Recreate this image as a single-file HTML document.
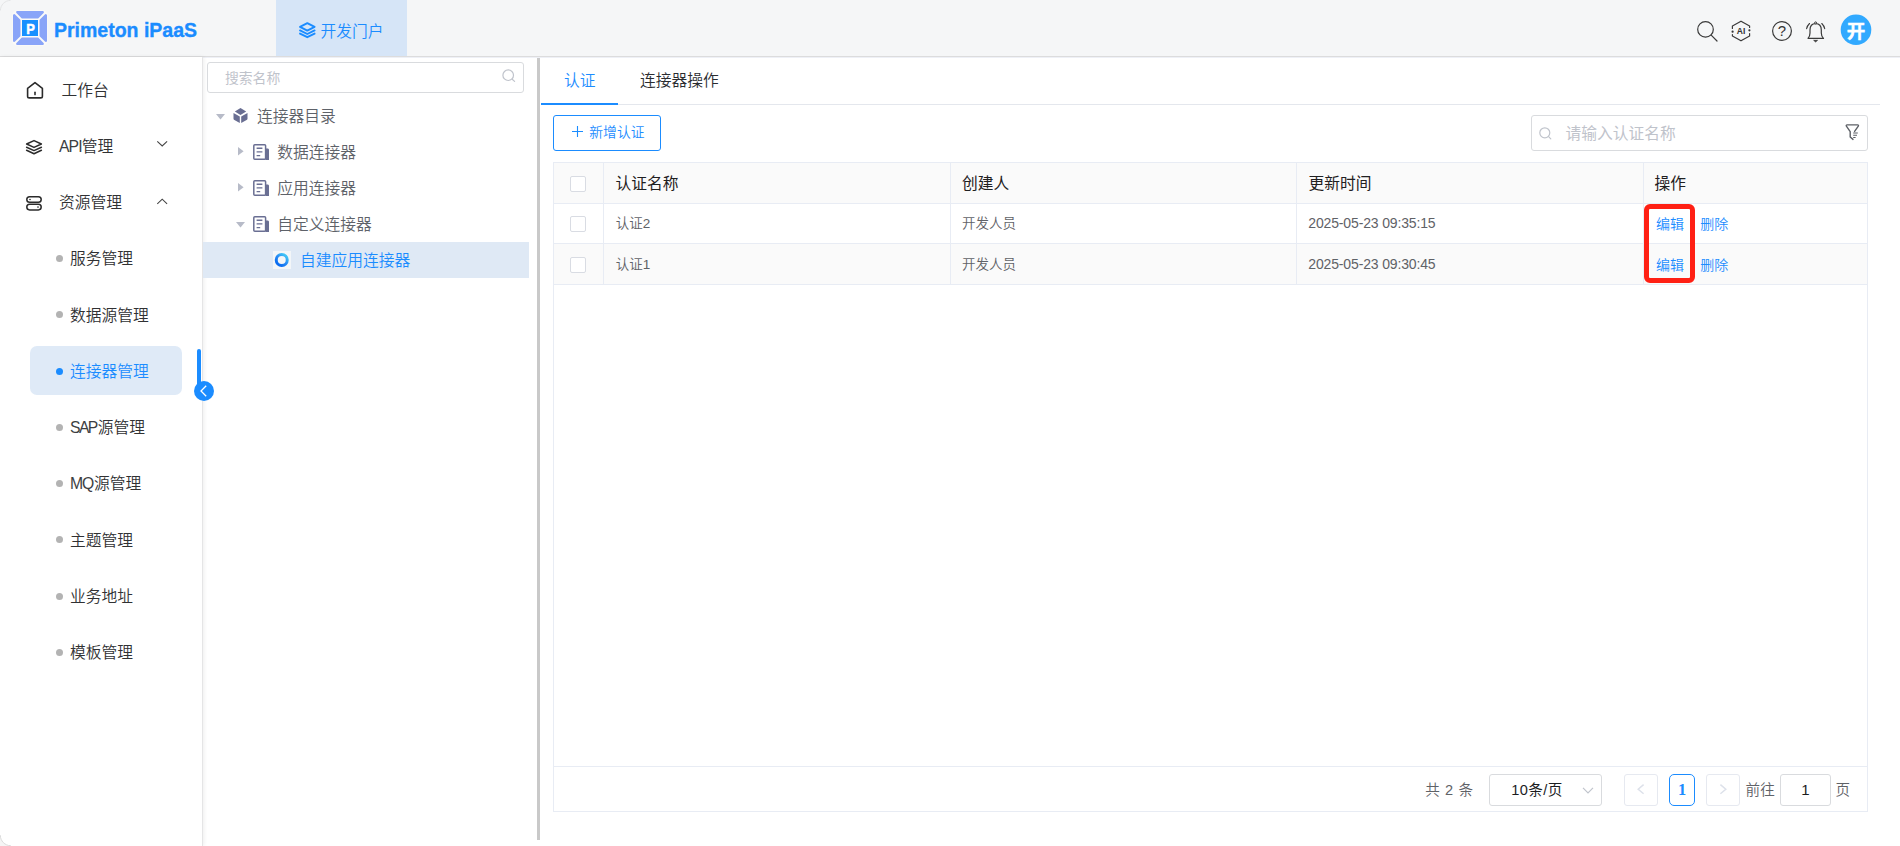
<!DOCTYPE html>
<html lang="zh-CN">
<head>
<meta charset="utf-8">
<title>Primeton iPaaS</title>
<style>
*{box-sizing:border-box;margin:0;padding:0}
html,body{width:1900px;height:846px;overflow:hidden;background:#fff}
body{font-family:"Liberation Sans","Noto Sans CJK SC",sans-serif;color:#303133;font-size:15.75px;position:relative;font-weight:350}
.t{position:absolute;white-space:nowrap;height:20px;line-height:20px}
svg{position:absolute;overflow:visible}
#hdr{position:absolute;left:0;top:0;width:1900px;height:57px;background:#f5f6f7;border-bottom:1px solid #dcdcdd;box-shadow:0 1px 0 #eef0f6}
#htab{position:absolute;left:276px;top:0;width:131px;height:56px;background:#d6e5f7}
#side{position:absolute;left:0;top:57px;width:203px;height:789px;background:#fff;border-right:1px solid #e5e5e6;box-shadow:1px 0 4px rgba(0,0,0,.07)}
.m1{font-size:15.75px;color:#303133}
.dot{position:absolute;width:7px;height:7px;border-radius:50%;background:#b3b3b3}
#tree{position:absolute;left:204px;top:57px;width:333px;height:789px;background:#fff}
.tn{font-size:15.75px;color:#5e6269}
.th{font-size:15.75px;color:#1f2021;font-weight:400}
.td{font-size:13.5px;color:#5f6267}
.lnk{font-size:14px;color:#1b8cff}
.cb{position:absolute;width:16px;height:16px;border:1px solid #d9dce3;border-radius:2px;background:#fff}
.ph{color:#bfc3cb;font-weight:400}
.box{position:absolute;border:1px solid #d9dbde;border-radius:3px;background:#fff}
.ln{position:absolute;background:#e8ecf4}
</style>
</head>
<body>
<div id="hdr"><div id="htab"></div></div>
<svg style="left:13px;top:11px" width="34" height="34" viewBox="0 0 34 34">
<rect x="-0.7" y="-0.7" width="35.4" height="35.4" rx="4.6" fill="#fbfaf8"/>
<g fill="#89a4f8" stroke="#89a4f8" stroke-width="2.4" stroke-linejoin="round">
<path d="M4.3 1.2H29.7L24.6 6.3H9.4Z"/>
<path d="M4.3 32.8H29.7L24.6 27.7H9.4Z"/>
<path d="M1.2 4.3V29.7L6.3 24.6V9.4Z"/>
<path d="M32.8 4.3V29.7L27.7 24.6V9.4Z"/>
</g>
<rect x="9" y="9" width="16" height="16" fill="#1890ff"/>
<text transform="translate(17.5,22.8) scale(0.9,1)" font-family="Liberation Sans, sans-serif" font-weight="700" font-size="14.4" fill="#fff" stroke="#fff" stroke-width="0.5" text-anchor="middle">P</text>
</svg>
<div class="t " style="left:54px;top:19.8px;font-size:19.5px;font-weight:700;color:#1b8cff;-webkit-text-stroke:0.35px #1b8cff">Primeton iPaaS</div>
<svg style="left:299px;top:22.4px" width="17" height="16" viewBox="0 0 17 16">
<g fill="none" stroke="#1b8cff" stroke-width="1.9" stroke-linejoin="round" stroke-linecap="round">
<path d="M8.3 1.2L15.6 4.9L8.3 8.6L1 4.9Z"/>
<path d="M1 8.4L8.3 12L15.6 8.4"/>
<path d="M1 11.6L8.3 15.2L15.6 11.6"/>
</g></svg>
<div class="t " style="left:320.5px;top:21.6px;font-size:15.75px;color:#1b8cff">开发门户</div>
<svg style="left:1690px;top:14px" width="190" height="34" viewBox="1690 14 190 34">
<g fill="none" stroke="#3a3a3a" stroke-width="1.2" stroke-linecap="round" stroke-linejoin="round">
<circle cx="1705.5" cy="29.4" r="7.8"/>
<path d="M1711.2 35.2L1717 41"/>
<path d="M1732.4 28.5V26L1741 21.2L1749.6 26V27.5"/>
<path d="M1749.6 33.5V36L1741 40.8L1732.4 36V34.5"/>
<circle cx="1782" cy="31" r="9.4"/>
<path d="M1808 38.4H1823.5C1822 37 1821.3 35.5 1821.3 33V30C1821.3 26 1819 23.6 1815.6 23.6C1812.2 23.6 1810 26 1810 30V33C1810 35.5 1809.3 37 1808 38.4Z"/>
<path d="M1809.5 23.5C1808 25 1807 26.8 1806.6 28.6M1821.8 23.5C1823.3 25 1824.3 26.8 1824.7 28.6" stroke-width="1.1"/>
</g>
<circle cx="1732.6" cy="31.7" r="1.1" fill="#333"/>
<circle cx="1749.4" cy="30.3" r="1.1" fill="#333"/>
<circle cx="1815.6" cy="22.9" r="1" fill="#f5f6f7" stroke="#333" stroke-width="1"/>
<path d="M1813.6 40.3H1817.6L1815.6 42Z" fill="#333" stroke="#333" stroke-width="0.6" stroke-linejoin="round"/>
<text x="1741" y="33.7" font-family="Liberation Sans, sans-serif" font-weight="700" font-size="8.5" fill="#333" text-anchor="middle">AI</text>
<text x="1782" y="36.3" font-family="Liberation Sans, sans-serif" font-size="15" fill="#333" text-anchor="middle">?</text>
<circle cx="1856" cy="29.8" r="15.3" fill="#31a9ff"/>
<text x="1856" y="38.2" font-family="Liberation Sans, Noto Sans CJK SC, sans-serif" font-weight="700" font-size="18.5" fill="#fff" stroke="#fff" stroke-width="0.4" text-anchor="middle">开</text>
</svg>
<div id="side"></div>
<svg style="left:26px;top:81px" width="18" height="19" viewBox="26 81 18 19">
<g fill="none" stroke="#2b2b2b" stroke-width="1.6" stroke-linejoin="round" stroke-linecap="round">
<path d="M27.6 88.4L35 82.6L42.4 88.4V96.2C42.4 97.3 41.8 97.9 40.7 97.9H29.3C28.2 97.9 27.6 97.3 27.6 96.2Z"/>
<path d="M35 92.2V94.6"/>
</g></svg>
<div class="t m1" style="left:61.5px;top:81.1px;">工作台</div>
<svg style="left:25px;top:139px" width="18" height="16" viewBox="25 139 18 16">
<g fill="none" stroke="#2b2b2b" stroke-width="1.5" stroke-linejoin="round" stroke-linecap="round">
<path d="M34 140.6L41.4 144L34 147.4L26.6 144Z"/>
<path d="M26.6 147.2L34 150.6L41.4 147.2"/>
<path d="M26.6 150.3L34 153.7L41.4 150.3"/>
</g></svg>
<div class="t m1" style="left:59px;top:137.1px;"><span style="letter-spacing:-0.9px;color:#3c3e42">API</span>管理</div>
<svg style="left:156px;top:140px" width="12" height="8" viewBox="156 140 12 8"><path d="M157.3 141.4L162.2 146L167.1 141.4" fill="none" stroke="#444" stroke-width="1.1"/></svg>
<svg style="left:25px;top:195px" width="18" height="17" viewBox="25 195 18 17">
<g fill="none" stroke="#2b2b2b" stroke-width="1.5">
<rect x="26.8" y="196.7" width="14.4" height="5.6" rx="2.8"/>
<rect x="26.8" y="204.3" width="14.4" height="5.6" rx="2.8"/>
</g>
<circle cx="30" cy="199.5" r="0.8" fill="#2b2b2b"/><circle cx="38" cy="207.1" r="0.8" fill="#2b2b2b"/>
</svg>
<div class="t m1" style="left:59px;top:193.1px;">资源管理</div>
<svg style="left:156px;top:197px" width="12" height="8" viewBox="156 197 12 8"><path d="M157.3 203.8L162.2 199.2L167.1 203.8" fill="none" stroke="#444" stroke-width="1.1"/></svg>
<div style="position:absolute;left:30px;top:346px;width:152px;height:49px;border-radius:7px;background:#dfeaf7"></div>
<div class="dot" style="left:56px;top:255.0px;"></div>
<div class="t m1" style="left:70px;top:249.3px;">服务管理</div>
<div class="dot" style="left:56px;top:311.3px;"></div>
<div class="t m1" style="left:70px;top:305.6px;">数据源管理</div>
<div class="dot" style="left:56px;top:367.5px;background:#1b8cff"></div>
<div class="t m1" style="left:70px;top:361.8px;color:#1b8cff">连接器管理</div>
<div class="dot" style="left:56px;top:423.8px;"></div>
<div class="t m1" style="left:70px;top:418.1px;"><span style="letter-spacing:-1.6px;color:#3c3e42">SAP</span><span style="margin-left:1px">源管理</span></div>
<div class="dot" style="left:56px;top:480.0px;"></div>
<div class="t m1" style="left:70px;top:474.3px;"><span style="letter-spacing:-1.2px;color:#3c3e42">MQ</span><span style="margin-left:1px">源管理</span></div>
<div class="dot" style="left:56px;top:536.3px;"></div>
<div class="t m1" style="left:70px;top:530.6px;">主题管理</div>
<div class="dot" style="left:56px;top:592.5px;"></div>
<div class="t m1" style="left:70px;top:586.8px;">业务地址</div>
<div class="dot" style="left:56px;top:648.8px;"></div>
<div class="t m1" style="left:70px;top:643.1px;">模板管理</div>
<div style="position:absolute;left:197px;top:349px;width:4px;height:42px;border-radius:2px 2px 0 0;background:#1b8cff"></div>
<svg style="left:194px;top:380.7px" width="20" height="20" viewBox="0 0 20 20"><circle cx="10" cy="10" r="10" fill="#1b8cff"/><path d="M12.2 4.8L7 10L12.2 15.2" fill="none" stroke="#fff" stroke-width="1.3"/></svg>
<div class="box" style="left:207px;top:62px;width:317px;height:31px"></div>
<div class="t ph" style="left:225px;top:68.6px;font-size:13.8px">搜索名称</div>
<svg style="left:502px;top:69px" width="14" height="14" viewBox="0 0 14 14"><g fill="none" stroke="#c0c4cc" stroke-width="1.2" stroke-linecap="round"><circle cx="6.2" cy="6.2" r="5.3"/><path d="M10.2 10.2L12.6 12.4"/></g></svg>
<svg style="left:216px;top:114px" width="9" height="6" viewBox="0 0 9 6"><path d="M0 0H9L4.5 5.5Z" fill="#b7bbc8"/></svg>
<svg style="left:233px;top:108px" width="15" height="15" viewBox="0 0 15 15"><g fill="#696e92">
<path d="M7.5 0L13.2 3.5L7.5 7L1.8 3.5Z"/>
<path d="M0.5 5L6.8 8.6V15L1.4 12.1C0.8 11.8 0.5 11.3 0.5 10.7Z"/>
<path d="M14.5 5L8.2 8.6V15L13.6 12.1C14.2 11.8 14.5 11.3 14.5 10.7Z"/>
</g></svg>
<div class="t tn" style="left:257px;top:107.2px;">连接器目录</div>
<svg style="left:237.6px;top:146.6px" width="6" height="9" viewBox="0 0 6 9"><path d="M0 0V8.6L5.6 4.3Z" fill="#b7bbc8"/></svg>
<svg style="left:253px;top:144px" width="16" height="16" viewBox="0 0 16 16">
<path d="M12.4 4.6H14.6C15.4 4.6 16 5.2 16 6V16H12.4Z" fill="#6a6f93"/>
<rect x="0.8" y="0.8" width="11.8" height="14.4" rx="1" fill="#fff" stroke="#6a6f93" stroke-width="1.5"/>
<path d="M3.6 4.2H9.4M3.6 7.9H9.4M3.6 11.6H7.2" stroke="#6a6f93" stroke-width="1.4" fill="none"/>
</svg>
<div class="t tn" style="left:277.3px;top:143.2px;">数据连接器</div>
<svg style="left:237.6px;top:182.6px" width="6" height="9" viewBox="0 0 6 9"><path d="M0 0V8.6L5.6 4.3Z" fill="#b7bbc8"/></svg>
<svg style="left:253px;top:180px" width="16" height="16" viewBox="0 0 16 16">
<path d="M12.4 4.6H14.6C15.4 4.6 16 5.2 16 6V16H12.4Z" fill="#6a6f93"/>
<rect x="0.8" y="0.8" width="11.8" height="14.4" rx="1" fill="#fff" stroke="#6a6f93" stroke-width="1.5"/>
<path d="M3.6 4.2H9.4M3.6 7.9H9.4M3.6 11.6H7.2" stroke="#6a6f93" stroke-width="1.4" fill="none"/>
</svg>
<div class="t tn" style="left:277.3px;top:179.2px;">应用连接器</div>
<svg style="left:236px;top:222.2px" width="9" height="6" viewBox="0 0 9 6"><path d="M0 0H9L4.5 5.5Z" fill="#b7bbc8"/></svg>
<svg style="left:253px;top:216px" width="16" height="16" viewBox="0 0 16 16">
<path d="M12.4 4.6H14.6C15.4 4.6 16 5.2 16 6V16H12.4Z" fill="#6a6f93"/>
<rect x="0.8" y="0.8" width="11.8" height="14.4" rx="1" fill="#fff" stroke="#6a6f93" stroke-width="1.5"/>
<path d="M3.6 4.2H9.4M3.6 7.9H9.4M3.6 11.6H7.2" stroke="#6a6f93" stroke-width="1.4" fill="none"/>
</svg>
<div class="t tn" style="left:277.3px;top:215.2px;">自定义连接器</div>
<div style="position:absolute;left:203px;top:242px;width:326px;height:36px;background:#dfe9f5"></div>
<svg style="left:273px;top:251px" width="18" height="18" viewBox="0 0 18 18">
<defs><linearGradient id="rg" x1="0.85" y1="0.1" x2="0.2" y2="0.9"><stop offset="0" stop-color="#3fc4f6"/><stop offset="0.45" stop-color="#2a8ff5"/><stop offset="1" stop-color="#0a6cf0"/></linearGradient></defs>
<rect width="18" height="18" fill="#f3f6f8"/>
<circle cx="8.75" cy="9" r="5.5" fill="none" stroke="url(#rg)" stroke-width="3"/>
</svg>
<div class="t tn" style="left:300px;top:251.3px;color:#1b8cff">自建应用连接器</div>
<div style="position:absolute;left:537px;top:58px;width:3px;height:782px;background:#c9c9c9"></div>
<div class="ln" style="left:541px;top:104px;width:1339px;height:1px;background:#e4e7ed"></div>
<div style="position:absolute;left:541px;top:103px;width:77px;height:2px;background:#1b8cff"></div>
<div class="t " style="left:564px;top:71.1px;color:#1b8cff">认证</div>
<div class="t " style="left:640px;top:71.1px;color:#2a2c30">连接器操作</div>
<div class="box" style="left:553px;top:115px;width:108px;height:36px;border-color:#1b8cff"></div>
<svg style="left:572px;top:126px" width="11" height="11" viewBox="0 0 11 11"><path d="M5.5 0V11M0 5.5H11" stroke="#1b8cff" stroke-width="1.1"/></svg>
<div class="t " style="left:589.3px;top:122.8px;font-size:13.8px;color:#1b8cff">新增认证</div>
<div class="box" style="left:1531px;top:115px;width:337px;height:36px"></div>
<svg style="left:1539px;top:126.5px" width="13" height="13" viewBox="0 0 13 13"><g fill="none" stroke="#c0c4cc" stroke-width="1.2" stroke-linecap="round"><circle cx="5.8" cy="5.8" r="5"/><path d="M9.6 9.6L11.8 11.8"/></g></svg>
<div class="t ph" style="left:1565.6px;top:123.8px;">请输入认证名称</div>
<svg style="left:1845px;top:123px" width="16" height="18" viewBox="1845 123 16 18"><g fill="none" stroke="#5d6066" stroke-width="1.4" stroke-linejoin="round" stroke-linecap="round">
<path d="M1854.6 131.4L1858.3 126.2C1858.7 125.5 1858.4 124.9 1857.6 124.9H1847.1C1846.3 124.9 1846 125.5 1846.4 126.2L1850.2 131.6V137L1853 139.4"/>
</g><path d="M1853.2 133H1857.8M1853.2 135.3H1857M1853.2 137.5H1855.6" stroke="#5d6066" stroke-width="1.1" fill="none"/></svg>
<div style="position:absolute;left:553px;top:162px;width:1315px;height:650px;border:1px solid #e8ecf4"></div>
<div style="position:absolute;left:554px;top:163px;width:1313px;height:40px;background:#fafafa"></div>
<div style="position:absolute;left:554px;top:244px;width:1313px;height:40px;background:#fafafa"></div>
<div class="ln" style="left:554px;top:203px;width:1313px;height:1px"></div>
<div class="ln" style="left:554px;top:243px;width:1313px;height:1px"></div>
<div class="ln" style="left:554px;top:284px;width:1313px;height:1px"></div>
<div class="ln" style="left:554px;top:766px;width:1313px;height:1px"></div>
<div class="ln" style="left:603px;top:163px;width:1px;height:121px"></div>
<div class="ln" style="left:950px;top:163px;width:1px;height:121px"></div>
<div class="ln" style="left:1296px;top:163px;width:1px;height:121px"></div>
<div class="ln" style="left:1643px;top:163px;width:1px;height:121px"></div>
<div class="cb" style="left:570px;top:176px"></div>
<div class="cb" style="left:570px;top:216px"></div>
<div class="cb" style="left:570px;top:257px"></div>
<div class="t th" style="left:615.5px;top:174.3px;">认证名称</div>
<div class="t th" style="left:962px;top:174.3px;">创建人</div>
<div class="t th" style="left:1308.5px;top:174.3px;">更新时间</div>
<div class="t th" style="left:1654.5px;top:174.3px;">操作</div>
<div class="t td" style="left:615.7px;top:213.5px;">认证2</div>
<div class="t td" style="left:962px;top:213.5px;">开发人员</div>
<div class="t td" style="left:1308.3px;top:212.7px;font-size:14px;letter-spacing:-0.15px">2025-05-23 09:35:15</div>
<div class="t lnk" style="left:1656px;top:214.0px;">编辑</div>
<div class="t lnk" style="left:1700.3px;top:214.0px;">删除</div>
<div class="t td" style="left:615.7px;top:254.5px;">认证1</div>
<div class="t td" style="left:962px;top:254.5px;">开发人员</div>
<div class="t td" style="left:1308.3px;top:253.7px;font-size:14px;letter-spacing:-0.15px">2025-05-23 09:30:45</div>
<div class="t lnk" style="left:1656px;top:255.0px;">编辑</div>
<div class="t lnk" style="left:1700.3px;top:255.0px;">删除</div>
<div style="position:absolute;left:1644.2px;top:203.6px;width:50.6px;height:79px;border:5px solid #ff2014;border-radius:6px"></div>
<div class="t " style="left:1425.2px;top:779.9px;font-size:14.6px;color:#5f6267;word-spacing:1.2px">共 2 条</div>
<div class="box" style="left:1489px;top:774px;width:113px;height:32px"></div>
<div class="t " style="left:1511.3px;top:779.9px;font-size:14.6px;color:#1c1d1f;font-weight:400;letter-spacing:0.4px">10条/页</div>
<svg style="left:1582px;top:787px" width="12" height="8" viewBox="0 0 12 8"><path d="M1 0.9L6 5.9L11 0.9" fill="none" stroke="#c0c4cc" stroke-width="1.2"/></svg>
<div class="box" style="left:1624px;top:774px;width:34px;height:32px;border-color:#e6e9f0"></div>
<svg style="left:1637px;top:784px" width="8" height="11" viewBox="0 0 8 11"><path d="M6.6 0.6L1.2 5.2L6.6 9.8" fill="none" stroke="#dde1ea" stroke-width="1.5"/></svg>
<div class="box" style="left:1669px;top:774px;width:26px;height:32px;border-color:#1b8cff;border-radius:5px"></div>
<div class="t " style="left:1669px;top:780.6px;width:26px;text-align:center;font-family:'Liberation Serif',serif;font-weight:700;font-size:16.5px;color:#1b8cff;margin-top:-0.7px">1</div>
<div class="box" style="left:1706px;top:774px;width:34px;height:32px;border-color:#e6e9f0"></div>
<svg style="left:1719px;top:784px" width="8" height="11" viewBox="0 0 8 11"><path d="M1.4 0.6L6.8 5.2L1.4 9.8" fill="none" stroke="#dde1ea" stroke-width="1.5"/></svg>
<div class="t " style="left:1745.6px;top:780.4px;font-size:14.6px;color:#5f6267">前往</div>
<div class="box" style="left:1780px;top:774px;width:51px;height:32px"></div>
<div class="t " style="left:1780px;top:780.1px;width:51px;text-align:center;font-size:15px;color:#1c1d1f;font-weight:400">1</div>
<div class="t " style="left:1835.6px;top:780.4px;font-size:14.6px;color:#5f6267">页</div>
<svg style="left:0;top:0" width="12" height="12" viewBox="0 0 12 12"><path d="M10.5 0.4C5 0.4 0.4 5 0.4 10.5" fill="none" stroke="#e4e5e6" stroke-width="1"/></svg>
<svg style="left:0;top:834px" width="12" height="12" viewBox="0 0 12 12"><path d="M0 12H10.8C5 12 0 7 0 1.2Z" fill="#f5f5f5"/><path d="M10.8 11.7C5 11.7 0.3 7 0.3 1.2" fill="none" stroke="#dadada" stroke-width="1"/></svg>
</body>
</html>
